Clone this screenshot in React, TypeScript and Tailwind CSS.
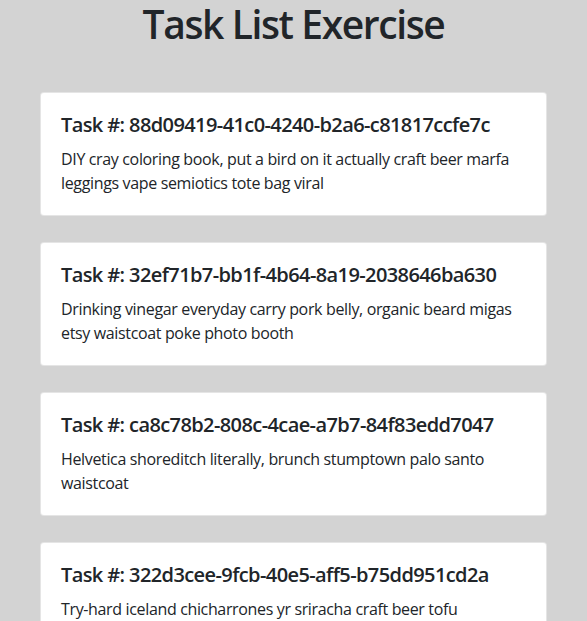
const tasks = [
  {
    id: '88d09419-41c0-4240-b2a6-c81817ccfe7c',
    text: 'DIY cray coloring book, put a bird on it actually craft beer marfa leggings vape semiotics tote bag viral',
  },
  {
    id: '32ef71b7-bb1f-4b64-8a19-2038646ba630',
    text: 'Drinking vinegar everyday carry pork belly, organic beard migas etsy waistcoat poke photo booth',
  },
  {
    id: 'ca8c78b2-808c-4cae-a7b7-84f83edd7047',
    text: 'Helvetica shoreditch literally, brunch stumptown palo santo waistcoat',
  },
  {
    id: '322d3cee-9fcb-40e5-aff5-b75dd951cd2a',
    text: 'Try-hard iceland chicharrones yr sriracha craft beer tofu adaptogen banjo',
  },
]

export default function App() {
  return (
    <div className="min-h-screen bg-[#d3d3d3] text-[#212529] font-['Open_Sans',sans-serif]">
      <h1 className="text-center text-[39px] leading-[48px] font-semibold tracking-[-1.4px]">Task List Exercise</h1>

      <div className="mx-10 mt-[44px] flex flex-col gap-[26px]">
        {tasks.map(task => (
          <div key={task.id} className="bg-white border border-black/10 rounded p-5">
            <h5 className="text-[20px] leading-[24px] font-semibold tracking-[-0.6px] mb-[10px]">Task #: {task.id}</h5>
            <p className="text-[16px] leading-[24px] tracking-[-0.35px]">{task.text}</p>
          </div>
        ))}
      </div>
    </div>
  )
}
